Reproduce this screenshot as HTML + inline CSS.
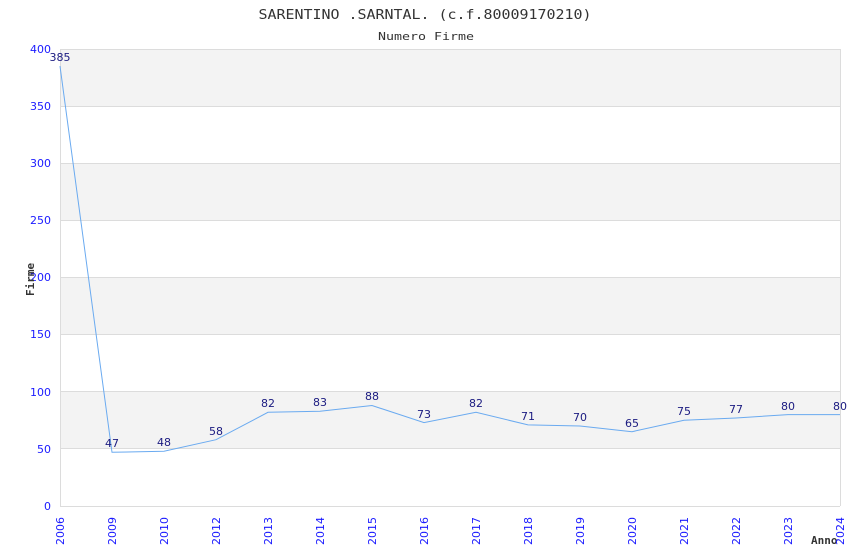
<!DOCTYPE html>
<html><head><style>body{margin:0;background:#fff}svg{display:block}</style></head><body>
<svg width="850" height="550" xmlns="http://www.w3.org/2000/svg">
<rect width="850" height="550" fill="#fff"/>
<g fill="#f3f3f3">
<rect x="60" y="49" width="780" height="57.1"/>
<rect x="60" y="163.3" width="780" height="57.1"/>
<rect x="60" y="277.5" width="780" height="57.1"/>
<rect x="60" y="391.8" width="780" height="57.1"/>
</g>
<g stroke="#dcdcdc" stroke-width="1">
<line x1="60" y1="49.5" x2="840" y2="49.5"/>
<line x1="60" y1="106.5" x2="840" y2="106.5"/>
<line x1="60" y1="163.5" x2="840" y2="163.5"/>
<line x1="60" y1="220.5" x2="840" y2="220.5"/>
<line x1="60" y1="277.5" x2="840" y2="277.5"/>
<line x1="60" y1="334.5" x2="840" y2="334.5"/>
<line x1="60" y1="391.5" x2="840" y2="391.5"/>
<line x1="60" y1="448.5" x2="840" y2="448.5"/>
<line x1="60" y1="506.5" x2="840" y2="506.5"/>
<line x1="60.5" y1="49" x2="60.5" y2="506"/>
<line x1="840.5" y1="49" x2="840.5" y2="506"/>
</g>
<text x="425" y="19" font-family="DejaVu Sans Mono, monospace" font-size="13" fill="#333" text-anchor="middle" textLength="333" lengthAdjust="spacingAndGlyphs">SARENTINO .SARNTAL. (c.f.80009170210)</text>
<text x="426" y="40" font-family="DejaVu Sans Mono, monospace" font-size="11" fill="#333" text-anchor="middle" textLength="96" lengthAdjust="spacingAndGlyphs">Numero Firme</text>
<g font-family="DejaVu Sans, sans-serif" font-size="11" fill="#1a1aff" text-anchor="end">
<text x="51" y="53">400</text><text x="51" y="110">350</text><text x="51" y="167">300</text>
<text x="51" y="224">250</text><text x="51" y="281">200</text><text x="51" y="338">150</text>
<text x="51" y="396">100</text><text x="51" y="453">50</text><text x="51" y="510">0</text>
</g>
<text transform="translate(34,296) rotate(-90)" font-family="DejaVu Sans Mono, monospace" font-size="11" font-weight="bold" fill="#333">Firme</text>
<text x="811" y="544" font-family="DejaVu Sans Mono, monospace" font-size="11" font-weight="bold" fill="#333">Anno</text>
<polyline fill="none" stroke="#6aaaf0" stroke-width="1" points="60,66.1 112,452.3 164,451.2 216,439.7 268,412.3 320,411.2 372,405.5 424,422.6 476,412.3 528,424.9 580,426 632,431.7 684,420.3 736,418 788,414.6 840,414.6"/>
<g font-family="DejaVu Sans, sans-serif" font-size="11" fill="#1a1a80" text-anchor="middle">
<text x="60" y="61">385</text><text x="112" y="447">47</text><text x="164" y="446">48</text>
<text x="216" y="435">58</text><text x="268" y="407">82</text><text x="320" y="406">83</text>
<text x="372" y="400">88</text><text x="424" y="418">73</text><text x="476" y="407">82</text>
<text x="528" y="420">71</text><text x="580" y="421">70</text><text x="632" y="427">65</text>
<text x="684" y="415">75</text><text x="736" y="413">77</text><text x="788" y="410">80</text>
<text x="840" y="410">80</text>
</g>
<g font-family="DejaVu Sans, sans-serif" font-size="11" fill="#1a1aff" text-anchor="end">
<text transform="translate(64,517) rotate(-90)">2006</text>
<text transform="translate(116,517) rotate(-90)">2009</text>
<text transform="translate(168,517) rotate(-90)">2010</text>
<text transform="translate(220,517) rotate(-90)">2012</text>
<text transform="translate(272,517) rotate(-90)">2013</text>
<text transform="translate(324,517) rotate(-90)">2014</text>
<text transform="translate(376,517) rotate(-90)">2015</text>
<text transform="translate(428,517) rotate(-90)">2016</text>
<text transform="translate(480,517) rotate(-90)">2017</text>
<text transform="translate(532,517) rotate(-90)">2018</text>
<text transform="translate(584,517) rotate(-90)">2019</text>
<text transform="translate(636,517) rotate(-90)">2020</text>
<text transform="translate(688,517) rotate(-90)">2021</text>
<text transform="translate(740,517) rotate(-90)">2022</text>
<text transform="translate(792,517) rotate(-90)">2023</text>
<text transform="translate(844,517) rotate(-90)">2024</text>
</g>
</svg>
</body></html>
